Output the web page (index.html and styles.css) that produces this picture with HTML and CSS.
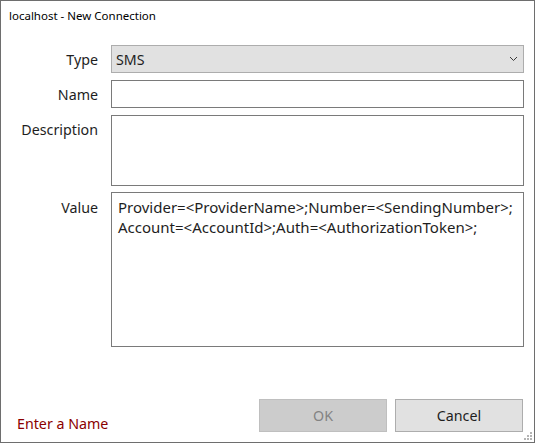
FILE: index.html
```html
<!DOCTYPE html>
<html>
<head>
<meta charset="utf-8">
<title>localhost - New Connection</title>
<link rel="stylesheet" href="styles.css">
</head>
<body>
<div class="window">
  <div class="title">localhost - New Connection</div>
  <div class="form">
    <div class="label">Type</div>
    <div class="select">
      <span class="select-text">SMS</span>
      <svg class="chevron" width="9" height="6" viewBox="0 0 9 6"><polyline points="1,1 4.5,4.5 8,1" fill="none" stroke="#3a3a3a" stroke-width="1"/></svg>
    </div>
    <div class="label">Name</div>
    <div class="input name"></div>
    <div class="label">Description</div>
    <div class="input desc"></div>
    <div class="label">Value</div>
    <div class="input value">Provider=&lt;ProviderName&gt;;Number=&lt;SendingNumber&gt;;<br>Account=&lt;AccountId&gt;;Auth=&lt;AuthorizationToken&gt;;</div>
  </div>
  <div class="footer">
    <div class="status">Enter a Name</div>
    <div class="buttons">
      <div class="btn btn-disabled">OK</div>
      <div class="btn">Cancel</div>
    </div>
  </div>
  <svg class="grip" width="9" height="9" viewBox="0 0 9 9">
    <rect x="6" y="0" width="2" height="2" fill="#b4b4b4"/>
    <rect x="3" y="3" width="2" height="2" fill="#b4b4b4"/>
    <rect x="6" y="3" width="2" height="2" fill="#b4b4b4"/>
    <rect x="0" y="6" width="2" height="2" fill="#b4b4b4"/>
    <rect x="3" y="6" width="2" height="2" fill="#b4b4b4"/>
    <rect x="6" y="6" width="2" height="2" fill="#b4b4b4"/>
  </svg>
</div>
</body>
</html>
```

FILE: styles.css
```css
html, body {
  margin: 0;
  padding: 0;
  background: #ffffff;
}

body {
  font-family: "Noto Sans", "Open Sans", sans-serif;
  color: #000000;
}

.window {
  position: relative;
  width: 535px;
  height: 443px;
  box-sizing: border-box;
  border: 1px solid #6e6e6e;
  background: #ffffff;
  display: flex;
  flex-direction: column;
}

.title {
  height: 44px;
  box-sizing: border-box;
  padding: 7px 0 0 8px;
  font-size: 11.5px;
  line-height: 16px;
  color: #000000;
}

.form {
  display: grid;
  grid-template-columns: 97px 413px;
  grid-template-rows: 28px 28px 71px 154px;
  column-gap: 13px;
  row-gap: 7px;
  font-size: 14.25px;
}

.label {
  text-align: right;
  line-height: 28px;
  padding-top: 1px;
  color: #1e1e1e;
}

.select {
  box-sizing: border-box;
  background: #e1e1e1;
  border: 1px solid #adadad;
  display: flex;
  align-items: center;
  justify-content: space-between;
  padding: 0 5px 0 4px;
}

.select-text {
  line-height: 26px;
  padding-top: 1px;
  color: #1e1e1e;
}

.chevron {
  display: block;
}

.input {
  box-sizing: border-box;
  border: 1px solid #7a7a7a;
  background: #ffffff;
}

.value {
  margin-top: -1px;
  padding: 4px 6px;
  font-size: 15px;
  line-height: 20px;
  color: #1e1e1e;
}

.footer {
  margin-top: auto;
  display: flex;
  justify-content: space-between;
  align-items: flex-end;
  padding: 0 11px 10px 16px;
  font-size: 14.25px;
}

.status {
  color: #8b0000;
  line-height: 20px;
  margin-bottom: -2px;
}

.buttons {
  display: flex;
  gap: 8px;
}

.btn {
  box-sizing: border-box;
  width: 128px;
  height: 33px;
  background: #e1e1e1;
  border: 1px solid #adadad;
  display: flex;
  align-items: center;
  justify-content: center;
  color: #1e1e1e;
}

.btn-disabled {
  background: #cccccc;
  border-color: #bfbfbf;
  color: #838383;
}

.grip {
  position: absolute;
  right: 1px;
  bottom: 1px;
}
```
